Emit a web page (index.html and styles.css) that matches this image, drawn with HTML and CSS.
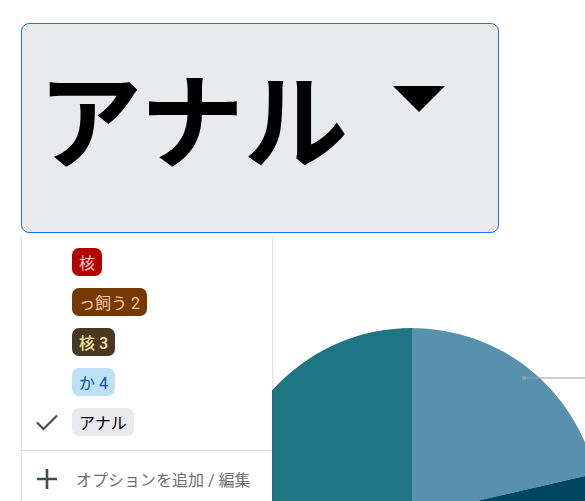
FILE: index.html
```html
<!DOCTYPE html>
<html lang="ja">
<head>
<meta charset="utf-8">
<link rel="stylesheet" href="styles.css">
</head>
<body>
<div class="page">
  <div class="select">
    <span class="select-value">アナル</span>
    <svg class="caret" width="52" height="26" viewBox="0 0 52 26"><polygon points="0,0 52,0 26,26" fill="#000"/></svg>
  </div>
  <div class="dropdown">
    <div class="menu">
      <div class="options">
        <div class="option"><span class="mark"></span><span class="chip chip-red">核</span></div>
        <div class="option"><span class="mark"></span><span class="chip chip-brown">っ飼う 2</span></div>
        <div class="option"><span class="mark"></span><span class="chip chip-olive">核 3</span></div>
        <div class="option"><span class="mark"></span><span class="chip chip-blue">か 4</span></div>
        <div class="option"><span class="mark"><svg width="24" height="24" viewBox="0 0 24 24"><path d="M2 12.5 L8.5 19 L22 5.5" fill="none" stroke="#3f4d59" stroke-width="2.2"/></svg></span><span class="chip chip-gray">アナル</span></div>
      </div>
      <div class="add-row"><span class="mark"><svg width="24" height="24" viewBox="0 0 24 24"><path d="M12 2 V22 M2 12 H22" stroke="#3f4d59" stroke-width="2.6" fill="none"/></svg></span><span class="add-label">オプションを追加 / 編集</span></div>
    </div>
    <svg class="chart" width="400" height="400" viewBox="0 0 400 400">
      <path d="M200 198 L200 10 A188 188 0 0 1 383.2 155.7 Z" fill="#5891ad"/>
      <path d="M200 198 L383.2 155.7 A188 188 0 0 1 200 386 Z" fill="#00465e"/>
      <path d="M200 198 L200 386 A188 188 0 0 1 200 10 Z" fill="#1e7584"/>
      <circle cx="312" cy="60" r="2.2" fill="#9e9e9e"/>
      <line x1="312" y1="60" x2="400" y2="60" stroke="#9e9e9e" stroke-width="1"/>
    </svg>
  </div>
</div>
</body>
</html>
```
FILE: styles.css
```css
html, body {
  margin: 0;
  padding: 0;
  overflow: hidden;
  background: #fff;
}
body {
  font-family: Roboto, "Noto Sans CJK JP", sans-serif;
}
.page {
  padding: 23px 0 0 21px;
}
.select {
  box-sizing: border-box;
  width: 478px;
  height: 210px;
  border: 1px solid #1a73e8;
  border-radius: 8px;
  background: #e8eaed;
  display: flex;
  align-items: flex-start;
  padding: 32px 0 0 16px;
}
.select-value {
  font-family: "Noto Sans CJK JP", sans-serif;
  font-size: 104px;
  font-weight: 700;
  line-height: 120px;
  color: #000;
}
.caret {
  display: block;
  margin: 30px 0 0 45px;
}
.dropdown {
  position: relative;
  display: flow-root;
}
.menu {
  position: absolute;
  top: 1px;
  left: 1px;
  width: 250px;
  background: #fff;
  border-radius: 4px;
  box-shadow: 0 1px 3px rgba(60, 64, 67, 0.3), 0 1px 2px rgba(60, 64, 67, 0.15);
  z-index: 2;
}
.options {
  padding: 8px 0;
  border-bottom: 1px solid #dadce0;
}
.option, .add-row {
  display: flex;
  align-items: center;
  height: 40px;
  padding-left: 13px;
}
.add-row {
  margin-top: 8px;
  padding-bottom: 8px;
}
.mark {
  width: 24px;
  height: 24px;
  margin-right: 13px;
  display: flex;
}
.add-row .mark {
  margin-right: 17px;
}
.chip {
  display: inline-flex;
  align-items: center;
  height: 28px;
  padding: 0 7px;
  border-radius: 7px;
  font-size: 16px;
  font-family: Roboto, "Noto Sans CJK JP", sans-serif;
}
.chip-red { background: #b10202; color: #ffcfc9; }
.chip-brown { background: #753800; color: #ffc8aa; }
.chip-olive { background: #473821; color: #ffe5a0; font-weight: 500; }
.chip-blue { background: #bfe1f6; color: #0a53a8; }
.chip-gray { background: #e8eaed; color: #000; }
.add-label {
  font-size: 16px;
  color: #6b6f73;
}
.chart {
  display: block;
  margin: 85px 0 0 191px;
}
```
